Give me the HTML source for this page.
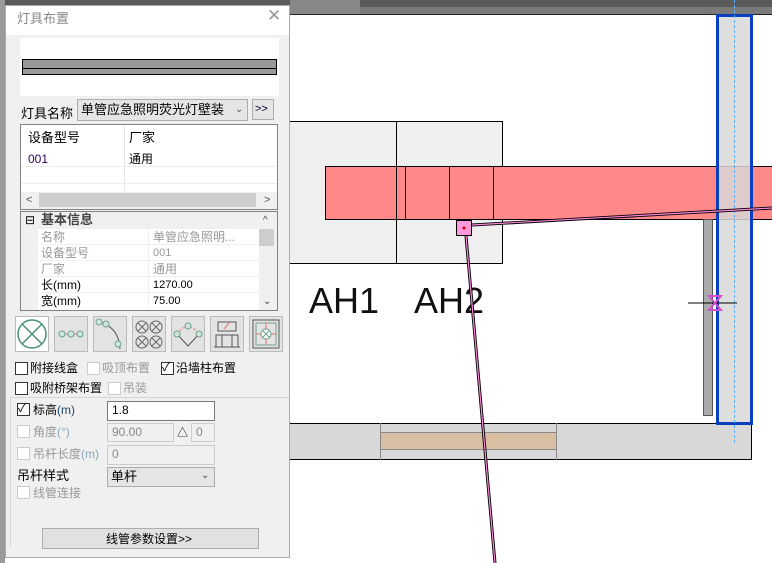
<!DOCTYPE html>
<html><head><meta charset="utf-8"><style>
*{box-sizing:border-box;margin:0;padding:0}
body{width:772px;height:563px;overflow:hidden;position:relative;background:#fff;font-family:"Liberation Sans","Noto Sans CJK SC",sans-serif;font-size:12px;color:#000}
.a{position:absolute}
.t{position:absolute;white-space:nowrap;line-height:14px}
.cb{position:absolute;width:13px;height:13px;border:1px solid #333;background:#fff}
.cbd{border-color:#ccc}
.g{color:#999}
.in{position:absolute;border:1px solid #7a7a7a;background:#fff;padding-left:4px;line-height:17px}
.ind{border-color:#ccc;background:#f0f0f0;color:#888}
.ib{position:absolute;top:316px;width:34px;height:36px;border:1px solid #bbb;background:#e3e3e3}
</style></head><body>
<!-- canvas -->
<div class="a" style="left:0;top:0;width:772px;height:15px;background:#5a5a5a"></div>
<div class="a" style="left:290px;top:0;width:70px;height:15px;background:#888"></div>
<div class="a" style="left:360px;top:7px;width:412px;height:8px;background:#7a7a7a"></div>
<div class="a" style="left:0;top:0;width:5px;height:563px;background:#9a9a9a"></div>
<div class="a" style="left:290px;top:14px;width:482px;height:1px;background:#222"></div>
<div class="a" style="left:290px;top:121px;width:213px;height:143px;background:#efefef;border:1px solid #000;border-left:none"></div>
<div class="a" style="left:396px;top:121px;width:1px;height:143px;background:#000"></div>
<div class="a" style="left:325px;top:166px;width:460px;height:54px;background:#ff8888;border:1px solid #000"></div>
<div class="a" style="left:396px;top:166px;width:1px;height:54px;background:#000"></div>
<div class="a" style="left:405px;top:166px;width:1px;height:54px;background:#000"></div>
<div class="a" style="left:449px;top:166px;width:1px;height:54px;background:#000"></div>
<div class="a" style="left:493px;top:166px;width:1px;height:54px;background:#000"></div>
<div class="a" style="left:703px;top:219px;width:10px;height:197px;background:#aaa;border:1px solid #555"></div>
<div class="a" style="left:290px;top:423px;width:462px;height:37px;background:#d8d8d8;border:1px solid #000;border-left:none"></div>
<div class="a" style="left:380px;top:423px;width:177px;height:37px;border-left:1px solid #888;border-right:1px solid #888"></div>
<div class="a" style="left:380px;top:432px;width:177px;height:18px;background:#d8bfa3;border:1px solid #888"></div>
<div class="a" style="left:716px;top:14px;width:37px;height:411px;background:rgba(216,216,216,.85);border:3px solid #0a3fc0"></div>
<div class="a" style="left:734px;top:0;width:0;height:443px;border-left:1px dashed #5ab0ff"></div>
<div class="t" style="left:309px;top:281px;font-size:36px;line-height:40px;color:#111">AH1</div>
<div class="t" style="left:414px;top:281px;font-size:36px;line-height:40px;color:#111">AH2</div>
<svg class="a" style="left:0;top:0" width="772" height="563">
<line x1="466" y1="236" x2="495" y2="563" stroke="#000" stroke-width="3"/>
<line x1="466" y1="236" x2="495" y2="563" stroke="#ff88dd" stroke-width="1.2"/>
<line x1="472" y1="225" x2="772" y2="208" stroke="#000" stroke-width="3"/>
<line x1="472" y1="225" x2="772" y2="208" stroke="#ff88dd" stroke-width="1.2"/>
<rect x="456.5" y="220.5" width="15" height="15" fill="#ff99dd" stroke="#000"/>
<circle cx="464" cy="228" r="1.5" fill="#c00"/>
<line x1="688" y1="303" x2="737" y2="303" stroke="#000"/>
<path d="M709 296h12l-12 14h12z" fill="none" stroke="#d050d0" stroke-width="2"/>
</svg>
<!-- dialog -->
<div class="a" style="left:5px;top:5px;width:285px;height:553px;background:#f0f0f0;border:1px solid #aaa"></div>
<div class="a" style="left:6px;top:6px;width:283px;height:29px;background:#fff"></div>
<div class="t" style="left:17px;top:12px;font-size:13px;color:#888">灯具布置</div>
<div class="t" style="left:267px;top:9px;font-size:17px;color:#999">✕</div>
<div class="a" style="left:20px;top:38px;width:259px;height:58px;background:#fff"></div>
<div class="a" style="left:22px;top:59px;width:255px;height:16px;background:#999;border:1px solid #000"></div>
<div class="a" style="left:22px;top:68px;width:255px;height:1px;background:#000"></div>
<div class="t" style="left:21px;top:107px;font-size:13px">灯具名称</div>
<div class="a" style="left:77px;top:99px;width:171px;height:22px;border:1px solid #adadad;background:#e5e5e5"></div>
<div class="t" style="left:81px;top:103px;font-size:13px">单管应急照明荧光灯壁装</div>
<div class="t" style="left:235px;top:103px;font-size:10px;color:#555">⌄</div>
<div class="a" style="left:252px;top:99px;width:22px;height:21px;border:1px solid #adadad;background:#e5e5e5"></div>
<div class="t" style="left:255px;top:102px;font-size:11px;color:#003">&gt;&gt;</div>
<div class="a" style="left:20px;top:124px;width:258px;height:86px;background:#fff;border:1px solid #828282"></div>
<div class="a" style="left:124px;top:126px;width:1px;height:65px;background:#e5e5e5"></div>
<div class="a" style="left:21px;top:166px;width:256px;height:1px;background:#eee"></div>
<div class="a" style="left:21px;top:183px;width:256px;height:1px;background:#eee"></div>
<div class="t" style="left:28px;top:131px;font-size:13px">设备型号</div>
<div class="t" style="left:129px;top:131px;font-size:13px">厂家</div>
<div class="t" style="left:28px;top:152px;color:#300060">001</div>
<div class="t" style="left:129px;top:152px">通用</div>
<div class="a" style="left:21px;top:192px;width:256px;height:17px;background:#f0f0f0"></div>
<div class="a" style="left:39px;top:193px;width:217px;height:14px;background:#cdcdcd"></div>
<div class="t" style="left:26px;top:193px;font-size:11px;color:#555">&lt;</div>
<div class="t" style="left:264px;top:193px;font-size:11px;color:#555">&gt;</div>
<div class="a" style="left:20px;top:211px;width:258px;height:100px;background:#f0f0f0;border:1px solid #828282"></div>
<div class="a" style="left:38px;top:229px;width:221px;height:81px;background:#fff"></div>
<div class="a" style="left:38px;top:244px;width:221px;height:1px;background:#f0f0f0"></div>
<div class="a" style="left:38px;top:260px;width:221px;height:1px;background:#f0f0f0"></div>
<div class="a" style="left:38px;top:276px;width:221px;height:1px;background:#f0f0f0"></div>
<div class="a" style="left:38px;top:292px;width:221px;height:1px;background:#f0f0f0"></div>
<div class="a" style="left:148px;top:229px;width:1px;height:81px;background:#f0f0f0"></div>
<div class="a" style="left:259px;top:229px;width:15px;height:17px;background:#cdcdcd"></div>
<div class="t" style="left:25px;top:213px;font-size:12px">⊟</div>
<div class="t" style="left:41px;top:213px;font-size:13px;font-weight:bold;color:#444">基本信息</div>
<div class="t" style="left:263px;top:214px;font-size:10px;color:#444">^</div>
<div class="t" style="left:263px;top:295px;font-size:10px;color:#444">⌄</div>
<div class="t g" style="left:41px;top:230px">名称</div><div class="t g" style="left:153px;top:230px">单管应急照明...</div>
<div class="t g" style="left:41px;top:246px">设备型号</div><div class="t g" style="left:153px;top:246px;font-size:11px">001</div>
<div class="t g" style="left:41px;top:262px">厂家</div><div class="t g" style="left:153px;top:262px">通用</div>
<div class="t" style="left:41px;top:278px">长(mm)</div><div class="t" style="left:153px;top:278px;font-size:11px">1270.00</div>
<div class="t" style="left:41px;top:294px">宽(mm)</div><div class="t" style="left:153px;top:294px;font-size:11px">75.00</div>
<!-- icon buttons -->
<div class="ib" style="left:15px;background:#fff"><svg width="32" height="34"><circle cx="16" cy="17" r="14" fill="none" stroke="#4a9070" stroke-width="1.5"/><path d="M6 7L26 27M26 7L6 27" stroke="#4a9070" stroke-width="1.5"/></svg></div>
<div class="ib" style="left:54px"><svg width="32" height="34"><path d="M7 17H25" stroke="#e07070"/><g fill="#cfe6da" stroke="#70a090"><circle cx="7" cy="17" r="3"/><circle cx="16" cy="17" r="3"/><circle cx="25" cy="17" r="3"/></g></svg></div>
<div class="ib" style="left:93px"><svg width="32" height="34"><path d="M5 5Q25 10 26 32" fill="none" stroke="#555"/><g fill="#cfe6da" stroke="#70a090"><circle cx="5" cy="5" r="3"/><circle cx="12" cy="7" r="3"/><circle cx="24" cy="27" r="3"/></g></svg></div>
<div class="ib" style="left:132px"><svg width="32" height="34" fill="none" stroke="#666"><circle cx="9" cy="10" r="6"/><circle cx="23" cy="10" r="6"/><circle cx="9" cy="25" r="6"/><circle cx="23" cy="25" r="6"/><path d="M5 6l8 8M13 6l-8 8M19 6l8 8M27 6l-8 8M5 21l8 8M13 21l-8 8M19 21l8 8M27 21l-8 8"/></svg></div>
<div class="ib" style="left:171px"><svg width="32" height="34"><path d="M5 17L16 29L27 17" fill="none" stroke="#555"/><path d="M5 17Q16 2 27 17" fill="none" stroke="#e07070" stroke-dasharray="2"/><g fill="#cfe6da" stroke="#70a090"><circle cx="16" cy="9" r="3"/><circle cx="5" cy="17" r="3"/><circle cx="27" cy="17" r="3"/></g></svg></div>
<div class="ib" style="left:210px"><svg width="32" height="34" fill="none" stroke="#555"><rect x="7" y="5" width="18" height="9"/><path d="M13 12l5-6" stroke="#e07070"/><path d="M5 30V18H27V30M11 18V30M21 18V30M3 30H29"/></svg></div>
<div class="ib" style="left:249px"><svg width="32" height="34"><rect x="3" y="3" width="26" height="28" fill="none" stroke="#555"/><rect x="6" y="6" width="20" height="22" fill="none" stroke="#70a090"/><path d="M16 6V28M6 17H26" stroke="#e07070"/><circle cx="16" cy="17" r="5" fill="#fff" stroke="#70a090"/><path d="M13 14l6 6M19 14l-6 6" stroke="#70a090"/></svg></div>
<!-- checkboxes -->
<div class="cb" style="left:15px;top:362px"></div><div class="t" style="left:30px;top:361px;font-size:12px">附接线盒</div>
<div class="cb cbd" style="left:87px;top:362px"></div><div class="t g" style="left:102px;top:361px;font-size:12px">吸顶布置</div>
<div class="cb" style="left:161px;top:362px"></div><div class="t" style="left:162px;top:360px;font-size:12px">✓</div><div class="t" style="left:176px;top:361px;font-size:12px">沿墙柱布置</div>
<div class="cb" style="left:15px;top:382px"></div><div class="t" style="left:30px;top:381px;font-size:12px">吸附桥架布置</div>
<div class="cb cbd" style="left:108px;top:382px"></div><div class="t g" style="left:123px;top:381px;font-size:12px">吊装</div>
<div class="a" style="left:10px;top:397px;width:279px;height:1px;background:#d5d5d5"></div>
<div class="a" style="left:10px;top:397px;width:1px;height:150px;background:#d5d5d5"></div>
<div class="cb" style="left:17px;top:403px"></div><div class="t" style="left:18px;top:401px">✓</div><div class="t" style="left:33px;top:403px;font-size:12px">标高<span style="color:#246">(m)</span></div>
<div class="in" style="left:107px;top:401px;width:108px;height:20px">1.8</div>
<div class="cb cbd" style="left:17px;top:425px"></div><div class="t g" style="left:33px;top:425px;font-size:12px">角度<span style="color:#8ab">(°)</span></div>
<div class="in ind" style="left:107px;top:423px;width:67px;height:19px">90.00</div>
<div class="t" style="left:177px;top:426px;font-size:11px">△</div>
<div class="in ind" style="left:191px;top:423px;width:24px;height:19px">0</div>
<div class="cb cbd" style="left:17px;top:447px"></div><div class="t g" style="left:33px;top:447px;font-size:12px">吊杆长度<span style="color:#8ab">(m)</span></div>
<div class="in ind" style="left:107px;top:445px;width:108px;height:20px">0</div>
<div class="t" style="left:17px;top:469px;font-size:13px">吊杆样式</div>
<div class="a" style="left:107px;top:467px;width:108px;height:20px;background:#e5e5e5;border:1px solid #adadad"></div>
<div class="t" style="left:111px;top:470px;font-size:13px">单杆</div>
<div class="t" style="left:201px;top:469px;font-size:10px;color:#444">⌄</div>
<div class="cb cbd" style="left:17px;top:486px"></div><div class="t g" style="left:33px;top:486px;font-size:12px">线管连接</div>
<div class="a" style="left:42px;top:528px;width:217px;height:21px;background:#e1e1e1;border:1px solid #adadad"></div>
<div class="t" style="left:106px;top:532px;font-size:12px">线管参数设置&gt;&gt;</div>
</body></html>
